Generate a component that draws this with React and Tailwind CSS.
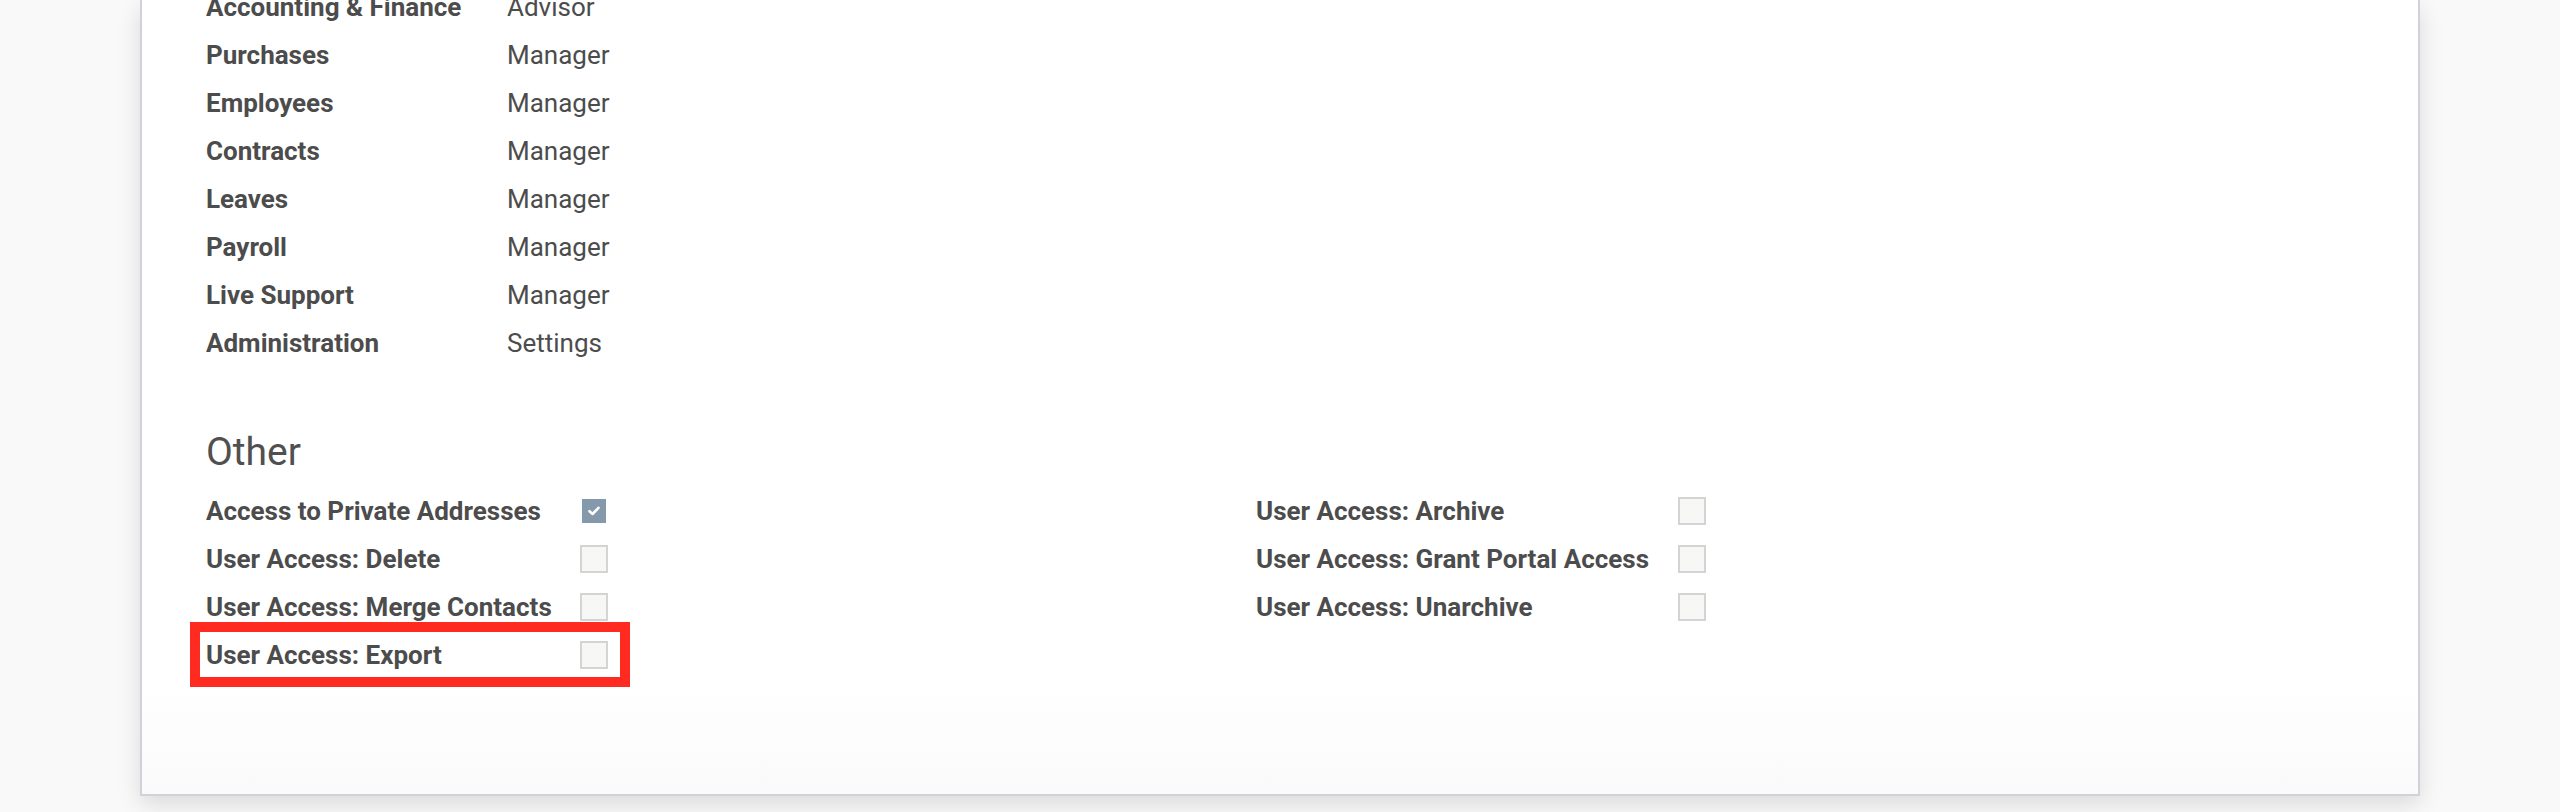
import React from "react";

const topRows = [
  ["Accounting & Finance", "Advisor"],
  ["Purchases", "Manager"],
  ["Employees", "Manager"],
  ["Contracts", "Manager"],
  ["Leaves", "Manager"],
  ["Payroll", "Manager"],
  ["Live Support", "Manager"],
  ["Administration", "Settings"],
];

function Box({ checked }) {
  return (
    <div className="flex h-[28px] w-[28px] items-center justify-center">
      {checked ? (
        <div className="flex h-[24px] w-[24px] items-center justify-center bg-[#8599ad]">
          <svg width="12" height="10" viewBox="0 0 12 10">
            <path d="M1.5 5.2 L4.6 8 L10.5 1.8" fill="none" stroke="#ffffff" strokeWidth="2.6" strokeLinecap="round" strokeLinejoin="round" />
          </svg>
        </div>
      ) : (
        <div className="h-[28px] w-[28px] border-2 border-[#d4d4d4] bg-[#f7f7f6]" />
      )}
    </div>
  );
}

function CheckRow({ label, checked, labelW, highlight }) {
  return (
    <div className="relative flex h-[48px] items-center">
      <div className="font-bold" style={{ width: labelW }}>
        {label}
      </div>
      <Box checked={checked} />
      {highlight && (
        <div className="pointer-events-none absolute left-[-16px] top-[-9px] h-[65px] w-[440px] border-[10px] border-[#ff2b20]" />
      )}
    </div>
  );
}

export default function App() {
  return (
    <div
      className="h-[812px] w-[2560px] overflow-hidden bg-[#f9f9f9] text-[26px] leading-[48px] text-[#4c4c4c]"
      style={{ fontFamily: "Roboto, 'Noto Sans', sans-serif" }}
    >
      <div className="ml-[140px] flex h-[796px] w-[2280px] flex-col border-x-2 border-b-2 border-[#cfd3d8] bg-[linear-gradient(to_bottom,#ffffff_86%,#fafafa)] shadow-[0_8px_22px_rgba(0,0,0,0.13)]">
        <div className="mt-[-17px] pl-[64px]">
          {topRows.map(([l, v]) => (
            <div key={l} className="flex h-[48px]">
              <div className="w-[301px] font-bold">{l}</div>
              <div>{v}</div>
            </div>
          ))}
          <div className="mt-[61px] mb-[11px] h-[48px] text-[39px] leading-[48px] text-[#505050]">Other</div>
          <div className="flex">
            <div className="w-[1050px]">
              <CheckRow label="Access to Private Addresses" checked labelW={374} />
              <CheckRow label="User Access: Delete" labelW={374} />
              <CheckRow label="User Access: Merge Contacts" labelW={374} />
              <CheckRow label="User Access: Export" labelW={374} highlight />
            </div>
            <div>
              <CheckRow label="User Access: Archive" labelW={422} />
              <CheckRow label="User Access: Grant Portal Access" labelW={422} />
              <CheckRow label="User Access: Unarchive" labelW={422} />
            </div>
          </div>
        </div>
      </div>
    </div>
  );
}
